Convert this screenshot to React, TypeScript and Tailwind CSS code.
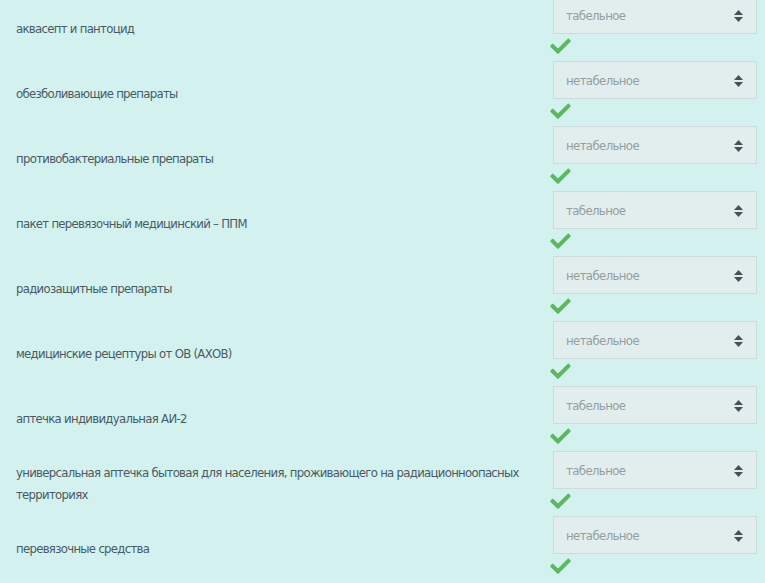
import React from "react";

const rows: { label: string; value: string }[] = [
  { label: "аквасепт и пантоцид", value: "табельное" },
  { label: "обезболивающие препараты", value: "нетабельное" },
  { label: "противобактериальные препараты", value: "нетабельное" },
  { label: "пакет перевязочный медицинский – ППМ", value: "табельное" },
  { label: "радиозащитные препараты", value: "нетабельное" },
  { label: "медицинские рецептуры от ОВ (АХОВ)", value: "нетабельное" },
  { label: "аптечка индивидуальная АИ-2", value: "табельное" },
  {
    label: "универсальная аптечка бытовая для населения, проживающего на радиационноопасных территориях",
    value: "табельное",
  },
  { label: "перевязочные средства", value: "нетабельное" },
];

function Check() {
  return (
    <svg width="21" height="16" viewBox="0 0 512 400" className="block">
      <path
        fill="#5cb85c"
        d="M173.9 389.4L7.5 223c-10-10-10-26.2 0-36.2l36.2-36.2c10-10 26.2-10 36.2 0L192 262.7 432.1 22.5c10-10 26.2-10 36.2 0l36.2 36.2c10 10 10 26.2 0 36.2L210.1 389.4c-10 10-26.2 10-36.2 0z"
      />
    </svg>
  );
}

function Arrows() {
  return (
    <svg width="9" height="12" viewBox="0 0 9 12" className="block">
      <path d="M4.5 0L9 5H0z" fill="#495057" />
      <path d="M4.5 12L0 7h9z" fill="#495057" />
    </svg>
  );
}

export default function App() {
  return (
    <main
      className="min-h-screen bg-[#d3f2ef] text-[#4a5a63] overflow-hidden"
      style={{ fontFamily: '"Liberation Sans Narrow", "DejaVu Sans Condensed", "Liberation Sans", sans-serif' }}
    >
      <div className="-mt-1">
        {rows.map((r, i) => (
          <div key={i} className="flex h-[65px]">
            <div className="flex-1 pl-4 pr-2 pt-1 text-[13px] tracking-[-0.7px] leading-[22px] h-[62px] flex items-center">
              <span>{r.label}</span>
            </div>
            <div className="w-[204px] mr-2">
              <div className="h-[38px] bg-[#e2eeed] border border-[#cbdcda] flex items-center justify-between pl-3 pr-[13px] pt-px text-[13px] tracking-[-0.6px] text-[#939f9f]">
                <span>{r.value}</span>
                <Arrows />
              </div>
              <div className="mt-[4px] -ml-[3px]">
                <Check />
              </div>
            </div>
          </div>
        ))}
      </div>
    </main>
  );
}
